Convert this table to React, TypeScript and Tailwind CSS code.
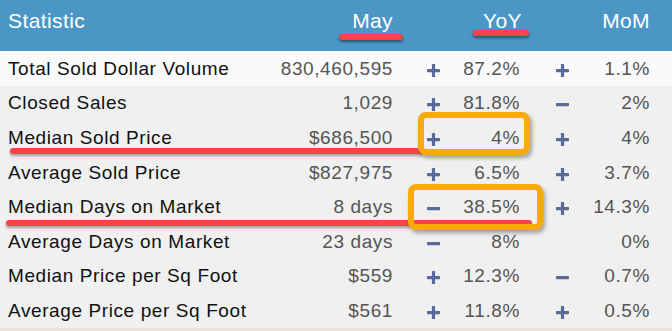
const rows = [
  { label: "Total Sold Dollar Volume", value: "830,460,595", yoySign: "+", yoy: "87.2%", momSign: "+", mom: "1.1%" },
  { label: "Closed Sales", value: "1,029", yoySign: "+", yoy: "81.8%", momSign: "-", mom: "2%" },
  { label: "Median Sold Price", value: "$686,500", yoySign: "+", yoy: "4%", momSign: "+", mom: "4%" },
  { label: "Average Sold Price", value: "$827,975", yoySign: "+", yoy: "6.5%", momSign: "+", mom: "3.7%" },
  { label: "Median Days on Market", value: "8 days", yoySign: "-", yoy: "38.5%", momSign: "+", mom: "14.3%" },
  { label: "Average Days on Market", value: "23 days", yoySign: "-", yoy: "8%", momSign: "", mom: "0%" },
  { label: "Median Price per Sq Foot", value: "$559", yoySign: "+", yoy: "12.3%", momSign: "-", mom: "0.7%" },
  { label: "Average Price per Sq Foot", value: "$561", yoySign: "+", yoy: "11.8%", momSign: "+", mom: "0.5%" },
];

function Sign({ kind }: { kind: string }) {
  if (!kind) return null;
  return (
    <svg width="13" height="13" viewBox="0 0 13 13" className="mt-1 text-[#5a6a98]">
      <rect x="0" y="5" width="13" height="3.2" rx="0.6" fill="currentColor" />
      {kind === "+" && <rect x="4.9" y="0" width="3.2" height="13" rx="0.6" fill="currentColor" />}
    </svg>
  );
}

const grid = "grid grid-cols-[272px_121px_80px_47px_84px_46px]";

export default function App() {
  return (
    <div className="relative w-[672px] h-[331px] overflow-hidden bg-[#e8e2d8] font-['Liberation_Sans',Arial,sans-serif]">
      <div className={`${grid} h-[51px] bg-[#4a97c6] pt-[10px] text-[21px] leading-[21px] tracking-[0.4px] text-white`}>
        <div className="pl-2">Statistic</div>
        <div className="flex justify-end">May</div>
        <div className="col-span-2 flex justify-end">
          <span className="mr-[-2px]">YoY</span>
        </div>
        <div className="col-span-2 flex justify-end">MoM</div>
      </div>

      {rows.map((r, i) => (
        <div
          key={r.label}
          className={`${grid} h-[34.6px] items-center text-[19px] leading-[19px] tracking-[0.6px] ${i === 0 ? "bg-[#fafafa]" : "bg-[#f0f0f0]"}`}
        >
          <div className="pl-2 whitespace-nowrap text-[#111]">{r.label}</div>
          <div className="flex justify-end whitespace-nowrap text-[#555]">{r.value}</div>
          <div className="flex justify-center">
            <Sign kind={r.yoySign} />
          </div>
          <div className="flex justify-end whitespace-nowrap text-[#555]">{r.yoy}</div>
          <div className="flex justify-center">
            <Sign kind={r.momSign} />
          </div>
          <div className="flex justify-end whitespace-nowrap text-[#555]">{r.mom}</div>
        </div>
      ))}

      {/* annotations */}
      <div className="absolute left-[339px] top-[34px] h-[6px] w-[64px] rounded-full bg-[#f64448] shadow-[0_2px_3px_rgba(0,0,0,0.45)]" />
      <div className="absolute left-[473px] top-[30px] h-[6px] w-[56px] rounded-full bg-[#f64448] shadow-[0_2px_3px_rgba(0,0,0,0.45)]" />
      <div className="absolute left-[10px] top-[148px] h-[6px] w-[414px] rounded-full bg-[#f64448] shadow-[0_2px_3px_rgba(0,0,0,0.35)]" />
      <div className="absolute left-[6px] top-[220px] h-[6px] w-[526px] rounded-full bg-[#f64448] shadow-[0_2px_3px_rgba(0,0,0,0.35)]" />
      <div className="absolute left-[418px] top-[112px] h-[43px] w-[112px] rounded-lg border-[6px] border-[#f8a90c] shadow-[2px_3px_4px_rgba(0,0,0,0.35)]" />
      <div className="absolute left-[408px] top-[184px] h-[46px] w-[135px] rounded-lg border-[6px] border-[#f8a90c] shadow-[2px_3px_4px_rgba(0,0,0,0.35)]" />
    </div>
  );
}
